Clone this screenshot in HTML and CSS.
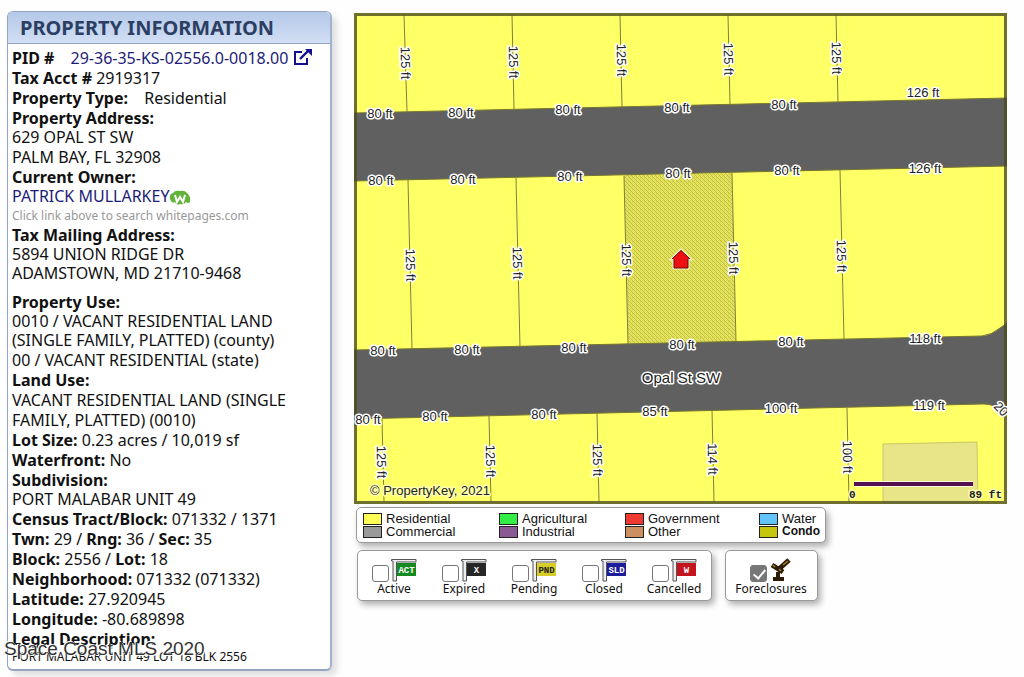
FILE: index.html
```html
<!DOCTYPE html>
<html lang="en">
<head>
<meta charset="utf-8">
<title>Property Information</title>
<link rel="stylesheet" href="styles.css">
</head>
<body>
<div class="page">
  <aside class="panel">
    <h1 class="panel-title">PROPERTY INFORMATION</h1>
    <div class="panel-body">
      <section class="facts">
        <p class="field spaced"><b>PID #</b> <a href="#pid">29-36-35-KS-02556.0-0018.00<svg class="ext" viewBox="0 0 19 17" aria-hidden="true"><path d="M9 3H2v12h12V9" fill="none" stroke="#111190" stroke-width="2"/><path d="M7 10l8-8" stroke="#111190" stroke-width="2.4"/><path d="M12 0h7v7z" fill="#111190"/></svg></a></p>
        <p class="field"><b>Tax Acct #</b> 2919317</p>
        <p class="field spaced"><b>Property Type:</b> Residential</p>
        <p class="field"><b>Property Address:</b></p>
        <p class="value">629 OPAL ST SW</p>
        <p class="value tall">PALM BAY, FL 32908</p>
        <p class="field"><b>Current Owner:</b></p>
        <p class="value"><a href="#owner">PATRICK MULLARKEY<svg class="wp" viewBox="0 0 22 16" aria-hidden="true"><path d="M1 9Q0 4 4 3Q6 0 11 1Q16 0 18 3Q22 6 21 12Q19 14 17 12Q15 15 11 14Q8 16 6 12Q3 14 1 9Z" fill="#62b23c"/><path d="M6 5l2 7 3-5 3 5 2-7" fill="none" stroke="#fff" stroke-width="2"/></svg></a></p>
        <p class="value hint">Click link above to search whitepages.com</p>
        <p class="field"><b>Tax Mailing Address:</b></p>
        <p class="value">5894 UNION RIDGE DR</p>
        <p class="value">ADAMSTOWN, MD 21710-9468</p>
      </section>
      <section class="facts">
        <p class="field"><b>Property Use:</b></p>
        <p class="value">0010 / VACANT RESIDENTIAL LAND<br>(SINGLE FAMILY, PLATTED) (county)</p>
        <p class="value tall">00 / VACANT RESIDENTIAL (state)</p>
        <p class="field"><b>Land Use:</b></p>
        <p class="value tall">VACANT RESIDENTIAL LAND (SINGLE<br>FAMILY, PLATTED) (0010)</p>
        <p class="field"><b>Lot Size:</b> 0.23 acres / 10,019 sf</p>
        <p class="field"><b>Waterfront:</b> No</p>
        <p class="field"><b>Subdivision:</b></p>
        <p class="value">PORT MALABAR UNIT 49</p>
        <p class="field"><b>Census Tract/Block:</b> 071332 / 1371</p>
        <p class="field"><b>Twn:</b> 29 / <b>Rng:</b> 36 / <b>Sec:</b> 35</p>
        <p class="field"><b>Block:</b> 2556 / <b>Lot:</b> 18</p>
        <p class="field"><b>Neighborhood:</b> 071332 (071332)</p>
        <p class="field"><b>Latitude:</b> 27.920945</p>
        <p class="field"><b>Longitude:</b> -80.689898</p>
        <p class="field"><b>Legal Description:</b></p>
        <p class="legal">PORT MALABAR UNIT 49 LOT 18 BLK 2556</p>
      </section>
    </div>
    <div class="watermark">Space Coast MLS 2020</div>
  </aside>

  <main class="main">
    <svg class="map" viewBox="354 13 653 491" role="img" aria-label="Parcel map around Opal St SW">
      <defs>
        <pattern id="hatch" width="4" height="4" patternUnits="userSpaceOnUse">
          <rect width="4" height="4" fill="#e4e45a"/>
          <path d="M0 0l4 4M-1 3l2 2M3-1l2 2" stroke="#c2be48" stroke-width="1"/>
          <path d="M0 2h1M2 0h1" stroke="#ccc84c" stroke-width="1"/>
        </pattern>
      </defs>
      <rect x="354" y="13" width="653" height="491" fill="#ffff66"/>
      <path d="M883 444L977 442L978 503H883Z" fill="#e7e588" stroke="#c9c765"/>
      <path d="M624 175L732 173L736 342L628 344Z" fill="url(#hatch)"/>
      <g class="lot-lines">
        <path d="M404 15L407 112M512 15L514 109M620 15L622 107M728 15L730 105M836 15L838 102"/>
        <path d="M408 180L412 349M516 178L520 347M624 176L628 344M732 173L736 342M840 170L844 339"/>
        <path d="M382 419L384 502M489 416L491 502M597 413L599 502M712 410L714 502M847 408L849 502"/>
      </g>
      <path class="road" d="M354 113L1007 98V166L354 181Z"/>
      <path class="road" d="M354 350L982 336Q992 335 1000 328L1007 323V416Q995 403 983 404L354 419Z"/>
      <rect x="355.500" y="14.500" width="650" height="488" fill="none" stroke="#4c4c20" stroke-opacity=".8" stroke-width="3"/>
      <g class="ft">
        <text x="380" y="118">80 ft</text><text x="461" y="117">80 ft</text><text x="568" y="114">80 ft</text><text x="677" y="112">80 ft</text><text x="784" y="109">80 ft</text><text x="923" y="97">126 ft</text>
        <text x="381" y="185">80 ft</text><text x="463" y="184">80 ft</text><text x="570" y="181">80 ft</text><text x="678" y="178">80 ft</text><text x="787" y="175">80 ft</text><text x="925" y="173">126 ft</text>
        <text x="383" y="355">80 ft</text><text x="467" y="354">80 ft</text><text x="574" y="352">80 ft</text><text x="682" y="349">80 ft</text><text x="791" y="346">80 ft</text><text x="925" y="343">118 ft</text>
        <text x="368" y="424">80 ft</text><text x="435" y="421">80 ft</text><text x="544" y="419">80 ft</text><text x="655" y="416">85 ft</text><text x="781" y="413">100 ft</text><text x="929" y="410">119 ft</text>
        <text transform="translate(998 412) rotate(45)">20</text>
      </g>
      <g class="ft">
        <text transform="translate(401 63) rotate(89)">125 ft</text><text transform="translate(509 62) rotate(89)">125 ft</text><text transform="translate(617 60) rotate(89)">125 ft</text><text transform="translate(724 59) rotate(89)">125 ft</text><text transform="translate(832 58) rotate(89)">125 ft</text>
        <text transform="translate(406 265) rotate(89)">125 ft</text><text transform="translate(513 263) rotate(89)">125 ft</text><text transform="translate(622 260) rotate(89)">125 ft</text><text transform="translate(729 258) rotate(89)">125 ft</text><text transform="translate(837 256) rotate(89)">125 ft</text>
        <text transform="translate(377 462) rotate(89)">125 ft</text><text transform="translate(486 461) rotate(89)">125 ft</text><text transform="translate(593 460) rotate(89)">125 ft</text><text transform="translate(708 459) rotate(89)">114 ft</text><text transform="translate(843 457) rotate(89)">100 ft</text>
      </g>
      <text class="street" x="681" y="383">Opal St SW</text>
      <text class="credit" x="370" y="495">© PropertyKey, 2021</text>
      <path d="M681 250L690 259H688V268H674V259H672Z" fill="#ee1111" stroke="#fff" stroke-opacity=".7" stroke-width="3" paint-order="stroke"/>
      <path d="M672 259L681 250.500L690 259M674 259V268H688V259" fill="none" stroke="#6c0a0a"/>
      <path d="M854 484H973" stroke="#fff" stroke-opacity=".7" stroke-width="6"/>
      <path d="M854 484H973" stroke="#521052" stroke-width="4"/>
      <g class="scale"><text x="849" y="498">0</text><text x="969" y="498">89 ft</text></g>
    </svg>

    <ul class="legend box">
      <li><i class="sw residential"></i>Residential</li>
      <li><i class="sw agricultural"></i>Agricultural</li>
      <li><i class="sw government"></i>Government</li>
      <li><i class="sw water"></i>Water</li>
      <li><i class="sw commercial"></i>Commercial</li>
      <li><i class="sw industrial"></i>Industrial</li>
      <li><i class="sw other"></i>Other</li>
      <li class="strong"><i class="sw condo"></i>Condo</li>
    </ul>

    <div class="filters">
      <div class="statuses box">
        <label class="status"><span class="mark"><input type="checkbox"><svg class="flag" viewBox="0 0 26 24" aria-hidden="true"><path class="pole" d="M2 23V3H0.500V1.500H25V4H5.500V23Z"/><rect x="6" y="5" width="19" height="13" fill="#168a22"/><text x="15.500" y="15">ACT</text></svg></span>Active</label>
        <label class="status"><span class="mark"><input type="checkbox"><svg class="flag" viewBox="0 0 26 24" aria-hidden="true"><path class="pole" d="M2 23V3H0.500V1.500H25V4H5.500V23Z"/><rect x="6" y="5" width="19" height="13" fill="#262626"/><text x="15.500" y="15">X</text></svg></span>Expired</label>
        <label class="status"><span class="mark"><input type="checkbox"><svg class="flag" viewBox="0 0 26 24" aria-hidden="true"><path class="pole" d="M2 23V3H0.500V1.500H25V4H5.500V23Z"/><rect x="6" y="5" width="19" height="13" fill="#d8cc28"/><text class="dark" x="15.500" y="15">PND</text></svg></span>Pending</label>
        <label class="status"><span class="mark"><input type="checkbox"><svg class="flag" viewBox="0 0 26 24" aria-hidden="true"><path class="pole" d="M2 23V3H0.500V1.500H25V4H5.500V23Z"/><rect x="6" y="5" width="19" height="13" fill="#1c1c9c"/><text x="15.500" y="15">SLD</text></svg></span>Closed</label>
        <label class="status"><span class="mark"><input type="checkbox"><svg class="flag" viewBox="0 0 26 24" aria-hidden="true"><path class="pole" d="M2 23V3H0.500V1.500H25V4H5.500V23Z"/><rect x="6" y="5" width="19" height="13" fill="#c41420"/><text x="15.500" y="15">W</text></svg></span>Cancelled</label>
      </div>
      <div class="foreclosures box">
        <label class="status"><span class="mark"><input type="checkbox" checked><svg class="gavel" viewBox="0 0 24 26" aria-hidden="true"><path d="M10 13L20 4" stroke="#2b1c08" stroke-width="5"/><path d="M3 9l11 7" stroke="#2b1c08" stroke-width="5"/><path d="M4 9l2 2M10 13l2 2M14 9l5-4" stroke="#a87a28" stroke-width="1.500"/><path d="M9 16v7M4 23h11" stroke="#2b1c08" stroke-width="4"/></svg></span>Foreclosures</label>
      </div>
    </div>
  </main>
</div>
</body>
</html>
```
FILE: styles.css
```css
* { box-sizing: border-box; }
body {
  margin: 0;
  background: #fefefe;
  color: #111;
  font-family: "Noto Sans", "Open Sans", sans-serif;
}
p, h1, ul { margin: 0; padding: 0; }
.page {
  display: flex;
  align-items: flex-start;
  gap: 22px;
  padding: 11px 17px 8px 7px;
}
.panel {
  position: relative;
  flex: 0 0 325px;
  background: #fff;
  border: 1px solid #93a3c0;
  border-right: 2px solid #a3b2d0;
  border-bottom: 2px solid #93a3c0;
  border-radius: 6px;
  box-shadow: 5px 5px 6px rgba(0, 0, 0, .12);
}
.panel-title {
  padding: 0 12px;
  font-size: 20px;
  line-height: 31px;
  color: #2c3f63;
  background: linear-gradient(#b4c8e8, #d2dff4);
  border-bottom: 1px solid #93a3c0;
  border-radius: 5px 5px 0 0;
}
.panel-body { padding: 4px; font-size: 16px; white-space: nowrap; }
.facts + .facts { margin-top: 9px; }
.field { line-height: 20px; height: 20px; }
.spaced b { margin-right: 12px; }
.value { line-height: 19px; }
.tall { line-height: 20px; }
.panel a { color: #1c1c78; text-decoration: none; }
.hint { font-size: 12px; color: #999; }
.legal { font-size: 12px; line-height: 16px; }
.ext { width: 19px; height: 17px; margin-left: 5px; vertical-align: -2px; }
.wp { width: 22px; height: 16px; vertical-align: -4px; }
.watermark {
  position: absolute;
  left: -4px;
  bottom: 9px;
  font: 19px/22px "Liberation Sans", Arial, sans-serif;
  color: #333;
  text-shadow: 1px 1px 0 #fff, -1px -1px 0 #fff;
  white-space: nowrap;
}
.main { flex: 1; min-width: 0; padding-top: 2px; }
.map { display: block; width: 100%; height: auto; }
.map text { font-family: "Liberation Sans", Arial, sans-serif; fill: #222; paint-order: stroke; stroke: #fff; stroke-width: 3px; stroke-linejoin: round; }
.lot-lines path { fill: none; stroke: #80803a; stroke-width: 1px; }
.road { fill: #606060; stroke: #77772f; stroke-width: 1px; }
.ft text { font-size: 13px; text-anchor: middle; }
.map .street { font-size: 15px; text-anchor: middle; }
.map .credit { font-size: 13px; stroke: #ffffb0; }
.map .scale text { font: bold 11px "Liberation Mono", monospace; stroke: #ffffb0; }
.box {
  background: #fff;
  border: 1px solid #999;
  border-radius: 5px;
  box-shadow: 3px 4px 6px rgba(0, 0, 0, .3);
}
.legend {
  display: grid;
  grid-template-columns: 136px 126px 134px auto;
  width: max-content;
  margin: 3px 0 0 2px;
  padding: 4px 5px 4px 6px;
  list-style: none;
  font: 13px/13px "Liberation Sans", Arial, sans-serif;
}
.legend li { display: flex; align-items: center; gap: 4px; }
.legend .strong { font-weight: bold; font-size: 12px; }
.sw { width: 19px; height: 12px; border: 1px solid #222; }
.residential { background: #ffff55; }
.agricultural { background: #33ee44; }
.government { background: #ee3a33; }
.water { background: #60c4fa; }
.commercial { background: #999; }
.industrial { background: #8a5a94; }
.other { background: #cc9060; }
.condo { background: #c6c60e; }
.filters { display: flex; gap: 13px; margin: 7px 0 0 3px; }
.statuses, .foreclosures { display: flex; padding: 6px 2px 4px 1px; }
.status { display: flex; flex-direction: column; align-items: center; width: 70px; font-size: 12px; line-height: 14px; }
.foreclosures .status { width: 88px; }
.mark { display: flex; align-items: flex-end; gap: 2px; height: 25px; }
.status input {
  appearance: none;
  position: relative;
  width: 17px;
  height: 17px;
  margin: 0;
  background: #fff;
  border: 1px solid #777;
  border-radius: 3px;
}
.status input:checked { background: #777; }
.status input:checked::after {
  content: "";
  position: absolute;
  left: 5px;
  top: 1px;
  width: 5px;
  height: 10px;
  border: solid #fff;
  border-width: 0 2px 2px 0;
  transform: rotate(40deg);
}
.flag { width: 26px; height: 24px; }
.pole { fill: #eee; stroke: #555; stroke-width: 1px; }
.flag text { font: bold 9px "Liberation Mono", monospace; fill: #fff; text-anchor: middle; }
.flag .dark { fill: #222; }
.gavel { width: 24px; height: 26px; }
```
